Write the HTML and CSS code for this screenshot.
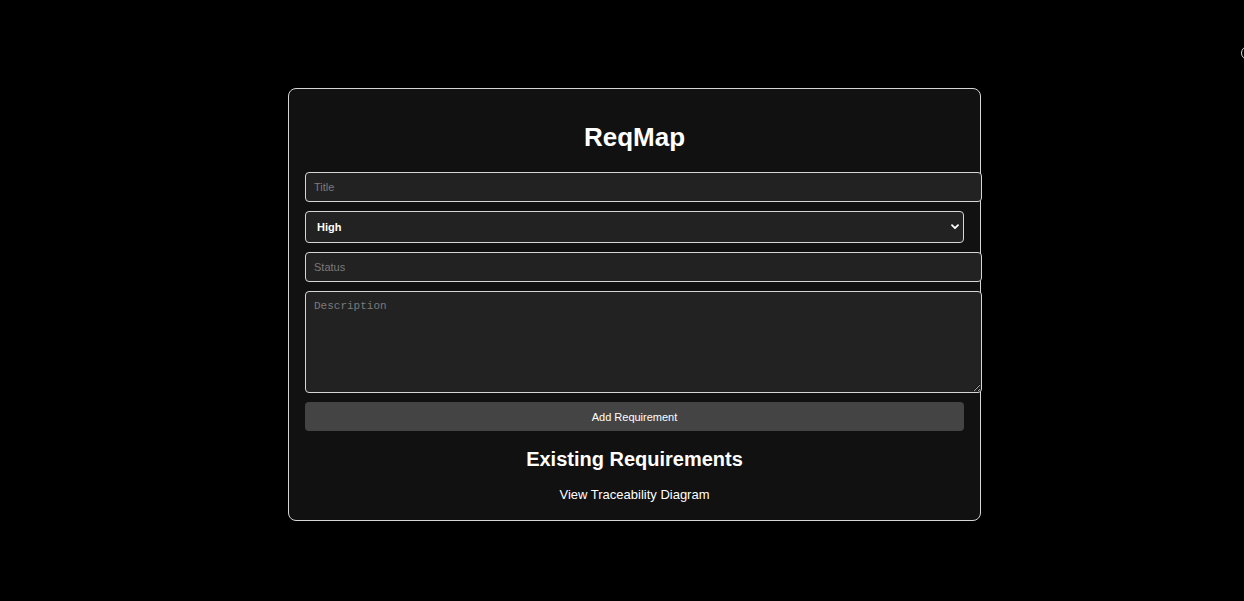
FILE: index.html
```html
<!DOCTYPE html>
<html lang="en">
<head>
<meta charset="utf-8">
<title>ReqMap</title>
<link rel="stylesheet" href="styles.css">
</head>
<body>
<main class="page">
  <section class="card">
    <h1 class="title">ReqMap</h1>
    <form class="form">
      <input class="field" type="text" placeholder="Title">
      <div class="select-wrap">
        <select class="select">
          <option>High</option>
          <option>Medium</option>
          <option>Low</option>
        </select>
        <svg class="chevron" width="8" height="6" viewBox="0 0 8 6"><path d="M1 1.2 L4 4.2 L7 1.2" fill="none" stroke="#fff" stroke-width="1.8" stroke-linecap="round" stroke-linejoin="round"/></svg>
      </div>
      <input class="field" type="text" placeholder="Status">
      <textarea class="area" placeholder="Description"></textarea>
      <button class="add" type="button">Add Requirement</button>
    </form>
    <h2 class="subtitle">Existing Requirements</h2>
    <div class="links"><a class="link" href="#">View Traceability Diagram</a></div>
  </section>
  <span class="edge"></span>
</main>
</body>
</html>
```

FILE: styles.css
```css
html, body {
  margin: 0;
  background: #000;
  color: #fff;
  font-family: "Liberation Sans", Arial, sans-serif;
}
.page {
  display: flex;
  justify-content: center;
  padding: 88px 0 0 25px;
  min-height: 513px;
}
.card {
  width: 659px;
  padding: 16px;
  background: #111;
  border: 1px solid #d6d6d6;
  border-radius: 8px;
  align-self: flex-start;
  text-align: center;
}
.title {
  font-size: 26px;
  font-weight: bold;
  margin: 17px 0 20px;
  line-height: 30px;
}
.form {
  display: flex;
  flex-direction: column;
  align-items: flex-start;
}
.field, .area {
  display: block;
  width: 100%;
  box-sizing: content-box;
  padding: 8px;
  border: 1px solid #d6d6d6;
  border-radius: 4px;
  background: #222;
  color: #fff;
  font-size: 11px;
  font-family: "Liberation Sans", Arial, sans-serif;
  margin: 0 0 9px;
  outline: none;
}
.field {
  height: 12px;
  line-height: 12px;
}
.field::placeholder {
  color: #7a7a7a;
}
.select-wrap {
  position: relative;
  width: 100%;
  margin: 0 0 9px;
}
.select {
  display: block;
  width: 100%;
  height: 32px;
  box-sizing: border-box;
  appearance: none;
  -webkit-appearance: none;
  padding: 0 11px;
  border: 1px solid #d6d6d6;
  border-radius: 4px;
  background: #222;
  color: #fff;
  font-size: 11px;
  font-weight: bold;
  font-family: "Liberation Sans", Arial, sans-serif;
  outline: none;
}
.chevron {
  position: absolute;
  right: 5px;
  top: 13px;
}
.area {
  height: 84px;
  font-family: "Liberation Mono", "DejaVu Sans Mono", monospace;
  resize: vertical;
}
.area::placeholder {
  color: #7a7a7a;
}
.add {
  display: block;
  width: 100%;
  height: 29px;
  border: none;
  border-radius: 4px;
  background: #444;
  color: #fff;
  font-size: 11px;
  font-family: "Liberation Sans", Arial, sans-serif;
  margin: 0;
}
.subtitle {
  font-size: 20px;
  font-weight: bold;
  margin: 17px 0 15px;
  line-height: 23px;
}
.links {
  line-height: 15px;
  padding-bottom: 2px;
}
.link {
  color: #fff;
  text-decoration: none;
  font-size: 13px;
}
.edge {
  position: absolute;
  left: 1241px;
  top: 46px;
  width: 12px;
  height: 12px;
  border: 1.5px solid #ddd;
  border-radius: 50%;
}
```
